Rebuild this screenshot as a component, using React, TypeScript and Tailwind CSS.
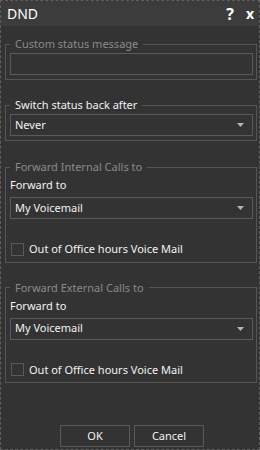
import React from 'react';

const font = { fontFamily: '"Noto Sans", "Open Sans", sans-serif' };

const Select = ({ value }: { value: string }) => (
  <div className="h-[22px] border border-[#5a5a5a] flex items-center justify-between pl-[4px] pr-[8px] text-[#f2f2f2]">
    <span>{value}</span>
    <svg width="7" height="4" viewBox="0 0 7 4" className="text-[#b5b5b5]">
      <path d="M0 0H7L3.5 4Z" fill="currentColor" />
    </svg>
  </div>
);

const Check = ({ label }: { label: string }) => (
  <label className="flex items-center gap-[5px] ml-[1px] mt-[22px] text-[#f2f2f2]">
    <span className="w-[13px] h-[13px] border border-[#5a5a5a]" />
    <span>{label}</span>
  </label>
);

const Group = ({ title, dim, children }: { title: string; dim?: boolean; children: React.ReactNode }) => (
  <fieldset className="border border-[#555] pl-[4px] pr-[3px] pb-[4px]">
    <legend className={`px-[5px] leading-4 ${dim ? 'text-[#8a8a8a]' : 'text-[#f2f2f2]'}`}>{title}</legend>
    {children}
  </fieldset>
);

export default function App() {
  return (
    <div style={font} className="w-[260px] h-[450px] border border-dashed border-[#5f5f5f] bg-[#333333] flex flex-col text-[11px]">
      <header className="h-[25px] bg-[#3c3c3c] flex items-center justify-between pl-[6px] pr-[5px]">
        <h1 className="text-[14px] text-white">DND</h1>
        <div className="flex items-center gap-[12px] text-white font-bold">
          <span className="text-[16px]">?</span>
          <span className="text-[14px]">x</span>
        </div>
      </header>

      <div className="flex-1 flex flex-col pl-[4px] pr-[2px] pt-[10px]">
        <Group title="Custom status message" dim>
          <div className="mt-[1px] h-[22px] border border-[#5a5a5a]" />
        </Group>

        <div className="mt-[17px]">
          <Group title="Switch status back after">
            <div className="mt-[1px]">
              <Select value="Never" />
            </div>
          </Group>
        </div>

        <div className="mt-[18px]">
          <Group title="Forward Internal Calls to" dim>
            <p className="mt-[2px] leading-4 text-[#f2f2f2]">Forward to</p>
            <div className="mt-[4px]">
              <Select value="My Voicemail" />
            </div>
            <Check label="Out of Office hours Voice Mail" />
          </Group>
        </div>

        <div className="mt-[17px]">
          <Group title="Forward External Calls to" dim>
            <p className="mt-[2px] leading-4 text-[#f2f2f2]">Forward to</p>
            <div className="mt-[4px]">
              <Select value="My Voicemail" />
            </div>
            <Check label="Out of Office hours Voice Mail" />
          </Group>
        </div>

        <div className="mt-auto mb-[2px] flex justify-center gap-[4px] pl-[2px]">
          <button className="w-[70px] h-[22px] border border-[#5a5a5a] text-[#f2f2f2]">OK</button>
          <button className="w-[70px] h-[22px] border border-[#5a5a5a] text-[#f2f2f2]">Cancel</button>
        </div>
      </div>
    </div>
  );
}
